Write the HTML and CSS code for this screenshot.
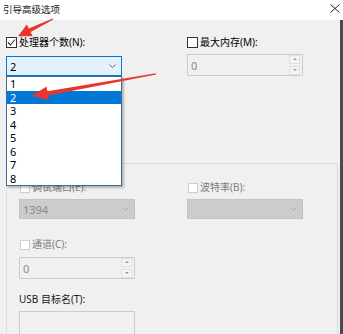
FILE: index.html
```html
<!DOCTYPE html>
<html lang="zh-CN">

<head>
  <meta charset="UTF-8" />
  <title>引导高级选项</title>
  <link rel="stylesheet" href="styles.css">
</head>

<body>
  <div class="janela">
    <div class="barra-titulo">
      <span class="titulo">引导高级选项</span>
      <svg class="fechar" width="10" height="9" viewBox="0 0 10 9">
        <path d="M0.5 0.5 L9.5 8.5 M9.5 0.5 L0.5 8.5" stroke="#222" stroke-width="1" fill="none" />
      </svg>
    </div>

    <div class="conteudo">
      <div class="topo">
        <div class="coluna">
          <div class="linha-check">
            <span class="caixa">
              <svg width="9" height="9" viewBox="0 0 9 9">
                <path d="M1 4.5 L3.5 7 L8 1.5" stroke="#333" stroke-width="1.1" fill="none" />
              </svg>
            </span>
            <span>处理器个数(N):</span>
          </div>
          <div class="combo aberto">
            <span>2</span>
            <svg width="7" height="4" viewBox="0 0 7 4">
              <path d="M0.5 0.5 L3.5 3.5 L6.5 0.5" stroke="#6a6a6a" fill="none" />
            </svg>
          </div>
        </div>

        <div class="coluna coluna-direita">
          <div class="linha-check">
            <span class="caixa"></span>
            <span>最大内存(M):</span>
          </div>
          <div class="spin">
            <span>0</span>
            <span class="spin-botoes">
              <span class="seta-cima"></span>
              <span class="seta-baixo"></span>
            </span>
          </div>
        </div>
      </div>

      <div class="grupo">
        <div class="grupo-grade">
          <div class="coluna">
            <div class="linha-check desativado">
              <span class="caixa"></span>
              <span>调试端口(E):</span>
            </div>
            <div class="combo inativo">
              <span>1394</span>
              <svg width="7" height="4" viewBox="0 0 7 4">
                <path d="M0.5 0.5 L3.5 3.5 L6.5 0.5" stroke="#a8a8a8" fill="none" />
              </svg>
            </div>

            <div class="linha-check desativado canal">
              <span class="caixa"></span>
              <span>通道(C):</span>
            </div>
            <div class="spin">
              <span>0</span>
              <span class="spin-botoes">
                <span class="seta-cima"></span>
                <span class="seta-baixo"></span>
              </span>
            </div>

            <div class="rotulo-usb">USB 目标名(T):</div>
            <div class="caixa-texto"></div>
          </div>

          <div class="coluna coluna-direita-grupo">
            <div class="linha-check desativado">
              <span class="caixa"></span>
              <span>波特率(B):</span>
            </div>
            <div class="combo inativo">
              <span></span>
              <svg width="7" height="4" viewBox="0 0 7 4">
                <path d="M0.5 0.5 L3.5 3.5 L6.5 0.5" stroke="#a8a8a8" fill="none" />
              </svg>
            </div>
          </div>
        </div>
      </div>
    </div>

    <ul class="lista">
      <li>1</li>
      <li class="selecionado">2</li>
      <li>3</li>
      <li>4</li>
      <li>5</li>
      <li>6</li>
      <li>7</li>
      <li>8</li>
    </ul>

    <svg class="setas" width="343" height="334" viewBox="0 0 343 334">
      <polygon fill="#e8352e"
        points="53.3,19.5 30.6,32.1 32.6,36.2 18,36.2 26.8,24.6 28.8,28.5 52.7,18.5" />
      <polygon fill="#e8352e"
        points="156.2,74.6 48.1,95.4 49,100 31.5,96 46.5,86.6 47.4,91.2 155.8,73.3" />
    </svg>
  </div>
</body>

</html>
```

FILE: styles.css
```css
body,
html {
  margin: 0;
  padding: 0;
  width: 343px;
  height: 334px;
  overflow: hidden;
  background-color: #f0f0f0;
  font-family: 'Noto Sans', 'Noto Sans CJK SC', sans-serif;
  color: #000;
}

.janela {
  position: relative;
  width: 343px;
  height: 334px;
}

.barra-titulo {
  height: 20px;
  background: #fff;
  display: flex;
  align-items: center;
  justify-content: space-between;
  padding: 0 3px 0 3px;
  box-sizing: border-box;
  font-size: 9.5px;
}

.titulo {
  color: #1a1a1a;
  margin-top: -3px;
}

.fechar {
  margin-top: -4px;
}

.conteudo {
  height: 314px;
  box-sizing: border-box;
  border-right: 3px solid #4a4a4a;
  overflow: hidden;
}

.topo {
  display: flex;
  padding: 17px 0 0 6px;
}

.coluna {
  display: flex;
  flex-direction: column;
  width: 116px;
}

.coluna-direita {
  margin-left: 65px;
}

.linha-check {
  display: flex;
  align-items: center;
  gap: 2px;
  height: 11px;
  font-size: 10px;
  line-height: 11px;
  white-space: nowrap;
}

.caixa {
  width: 11px;
  height: 11px;
  box-sizing: border-box;
  border: 1px solid #333;
  background: #fff;
  display: flex;
  align-items: center;
  justify-content: center;
  flex-shrink: 0;
}

.desativado {
  color: #7d7d7d;
}

.desativado .caixa {
  width: 10px;
  height: 10px;
  margin-left: 1px;
  border-color: #cfcfcf;
}

.combo {
  margin-top: 8px;
  height: 20px;
  box-sizing: border-box;
  display: flex;
  align-items: center;
  justify-content: space-between;
  padding: 0 5px 0 3px;
  font-size: 11px;
}

.combo.aberto {
  background: #e5f1fb;
  border: 1px solid #0078d7;
}

.combo.inativo {
  margin-top: 6px;
  background: #cccccc;
  border: 1px solid #c4c4c4;
  color: #8a8a8a;
}

.spin {
  margin-top: 6px;
  height: 22px;
  box-sizing: border-box;
  border: 1px solid #cccccc;
  background: #f0f0f0;
  display: flex;
  align-items: center;
  justify-content: space-between;
  padding: 0 2px 0 3px;
  font-size: 11px;
  color: #8a8a8a;
}

.spin-botoes {
  display: flex;
  flex-direction: column;
  gap: 2px;
  width: 11px;
}

.seta-cima,
.seta-baixo {
  height: 7px;
  border: 1px solid #e0e0e0;
  background: #f4f4f4;
  position: relative;
}

.seta-cima::after,
.seta-baixo::after {
  content: '';
  position: absolute;
  left: 3px;
  top: 2px;
  border-left: 2px solid transparent;
  border-right: 2px solid transparent;
}

.seta-cima::after {
  border-bottom: 2px solid #9a9a9a;
}

.seta-baixo::after {
  border-top: 2px solid #9a9a9a;
}

.grupo {
  margin: 87px 2px 0 6px;
  height: 200px;
  border: 1px solid #dcdcdc;
  border-bottom: 0;
}

.grupo-grade {
  display: flex;
  padding: 18px 0 0 12px;
}

.coluna-direita-grupo {
  margin-left: 52px;
}

.canal {
  margin-top: 20px;
}

.canal + .spin {
  margin-top: 7px;
}

.rotulo-usb {
  margin-top: 14px;
  height: 12px;
  font-size: 10px;
  line-height: 12px;
  color: #1a1a1a;
}

.caixa-texto {
  margin-top: 6px;
  height: 30px;
  box-sizing: border-box;
  border: 1px solid #cccccc;
  background: #f0f0f0;
}

.lista {
  position: absolute;
  top: 76px;
  left: 6px;
  width: 116px;
  margin: 0;
  padding: 0;
  list-style: none;
  box-sizing: border-box;
  background: #fff;
  border: 1px solid #3f6c99;
  box-shadow: 2px 2px 2px rgba(0, 0, 0, 0.25);
  font-size: 11px;
}

.lista li {
  height: 13.5px;
  line-height: 13.5px;
  padding-left: 3px;
}

.lista li.selecionado {
  background: #0078d7;
  color: #fff;
}

.setas {
  position: absolute;
  top: 0;
  left: 0;
  pointer-events: none;
}
```
